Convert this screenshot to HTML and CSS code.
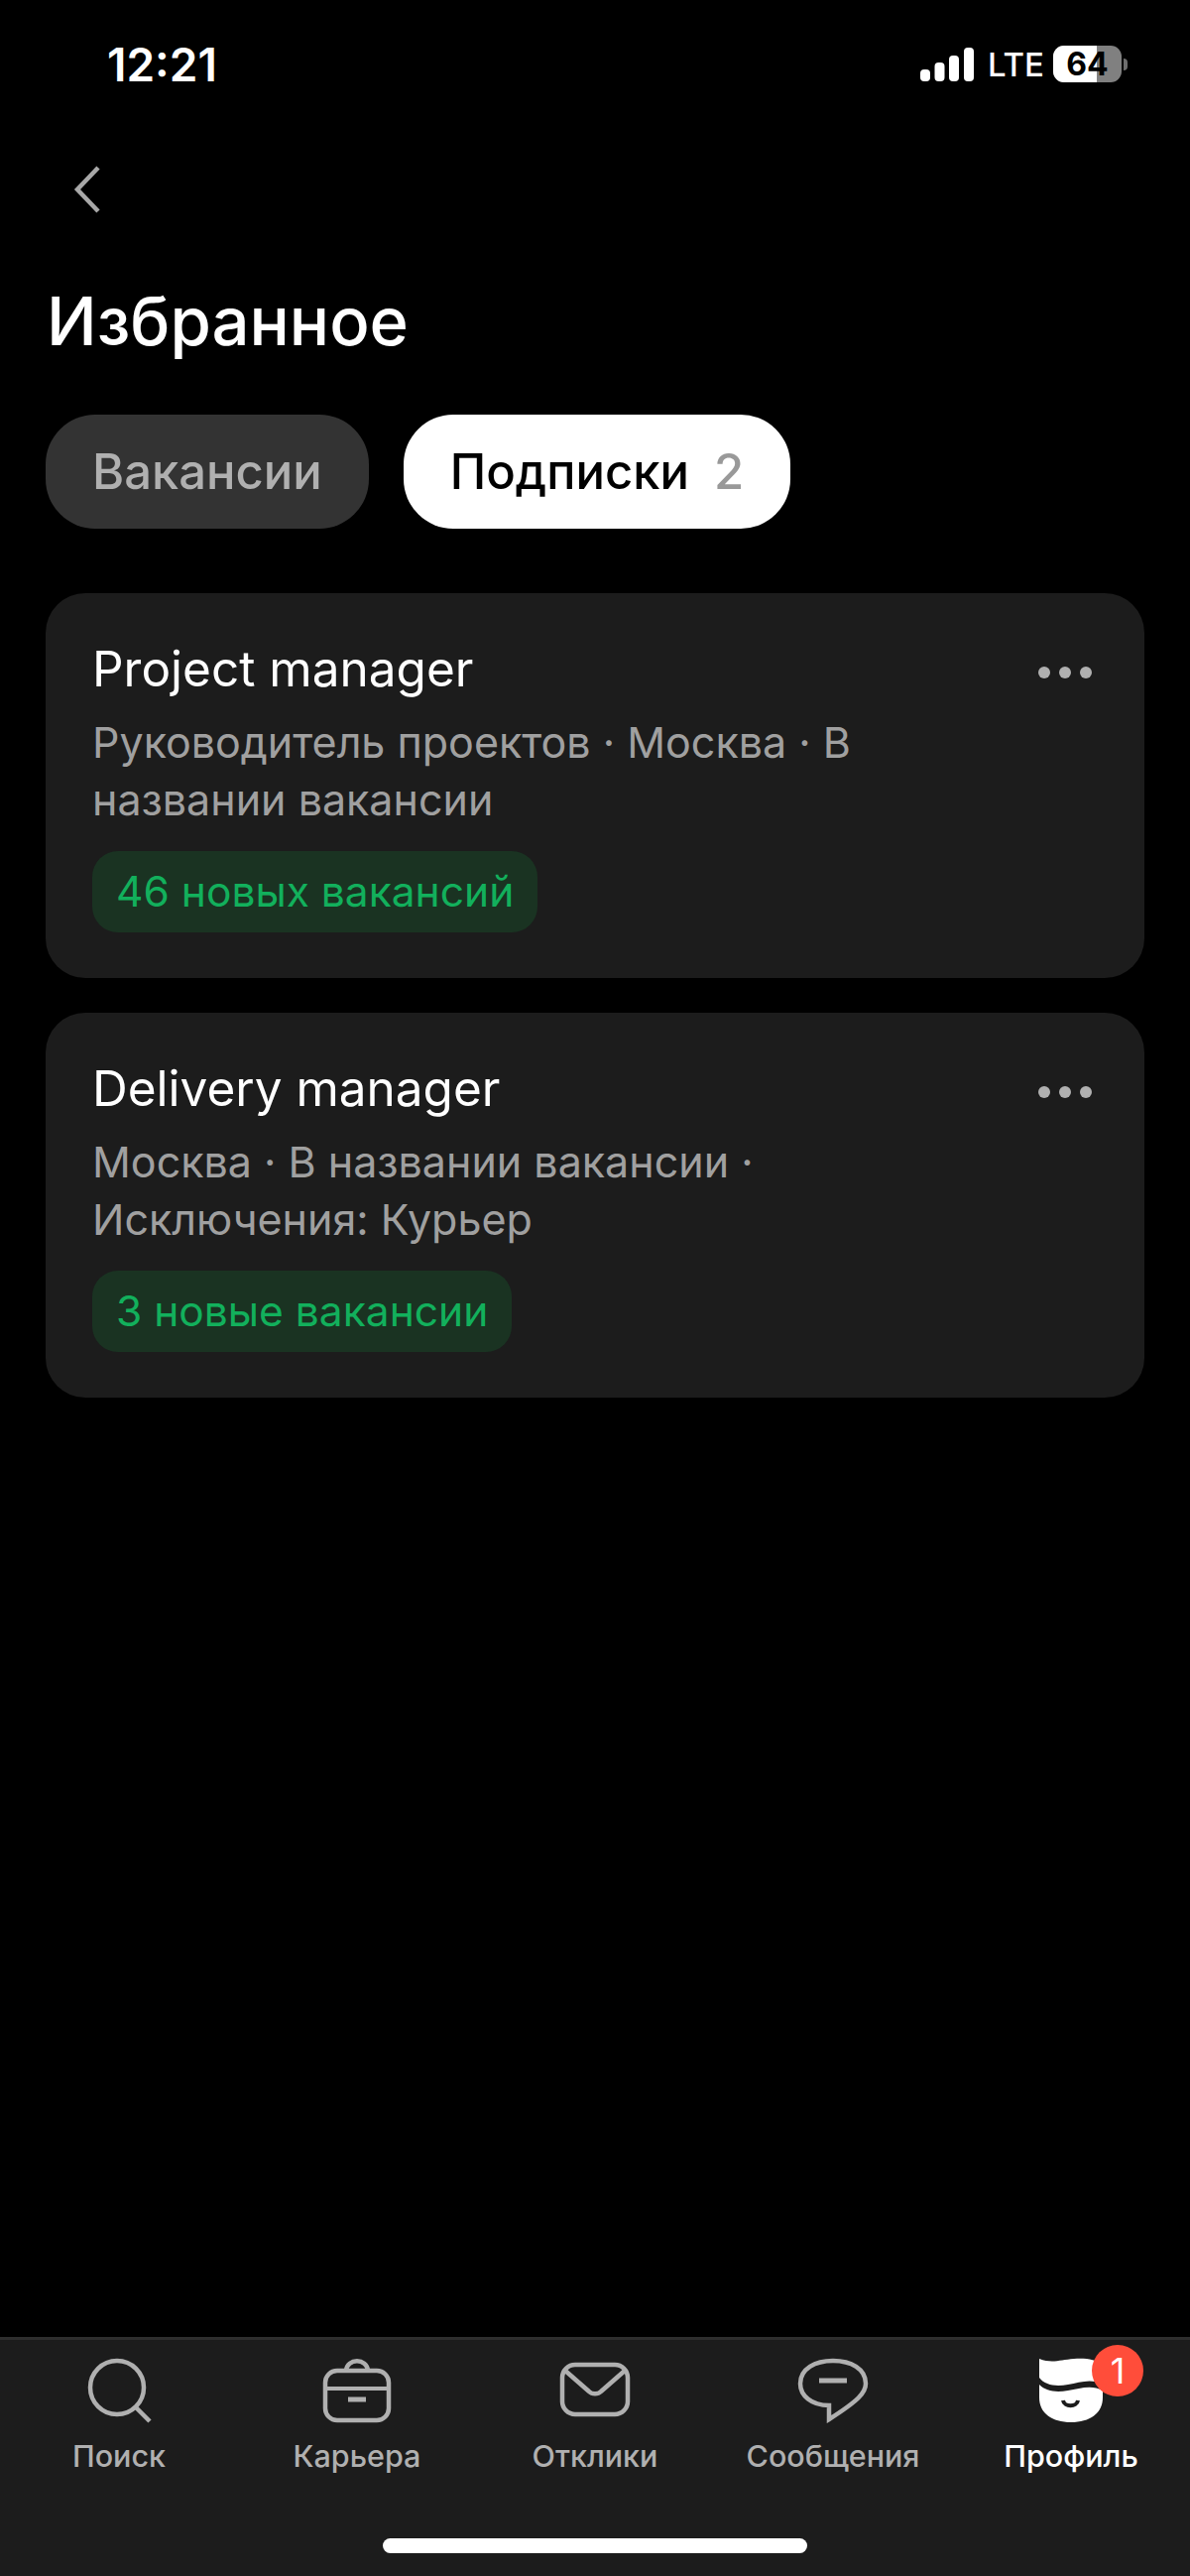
FILE: index.html
```html
<!DOCTYPE html>
<html lang="ru">
<head>
    <meta charset="UTF-8">
    <meta name="viewport" content="width=device-width, initial-scale=1.0">
    <title>Избранное</title>
    <link rel="stylesheet" href="styles.css">
</head>
<body>
    <div class="screen">
        <div class="status-bar">
            <span class="time">12:21</span>
            <div class="status-icons">
                <svg class="signal" width="54" height="34" viewBox="0 0 54 34" fill="#fff">
                    <rect x="0" y="22" width="10" height="12" rx="4"/>
                    <rect x="14.500" y="15" width="10" height="19" rx="4"/>
                    <rect x="29" y="8" width="10" height="26" rx="4"/>
                    <rect x="44" y="0" width="10" height="34" rx="4"/>
                </svg>
                <span class="lte">LTE</span>
                <div class="battery">
                    <div class="battery-body">
                        <div class="battery-fill"></div>
                        <span class="battery-level">64</span>
                    </div>
                    <div class="battery-nub"></div>
                </div>
            </div>
        </div>

        <div class="back-row">
            <svg width="30" height="48" viewBox="0 0 30 48" fill="none" stroke="#a8a8a8" stroke-width="4.500">
                <path d="M26 2 L5 24 L26 46"/>
            </svg>
        </div>

        <h1 class="title">Избранное</h1>

        <div class="tabs">
            <div class="tab">Вакансии</div>
            <div class="tab tab-active">Подписки <span class="tab-count">2</span></div>
        </div>

        <div class="cards">
            <div class="card">
                <div class="card-head">
                    <div class="card-title">Project manager</div>
                    <div class="dots"><i></i><i></i><i></i></div>
                </div>
                <div class="card-text">Руководитель проектов · Москва · В названии вакансии</div>
                <div class="chip">46 новых вакансий</div>
            </div>
            <div class="card">
                <div class="card-head">
                    <div class="card-title">Delivery manager</div>
                    <div class="dots"><i></i><i></i><i></i></div>
                </div>
                <div class="card-text">Москва · В названии вакансии · Исключения: Курьер</div>
                <div class="chip">3 новые вакансии</div>
            </div>
        </div>

        <div class="nav">
            <div class="nav-items">
                <div class="nav-item">
                    <svg width="70" height="66" viewBox="0 0 70 66" fill="none" stroke="#b0b0b0" stroke-width="4.500">
                        <circle cx="33" cy="30" r="27"/>
                        <path d="M52 50 L66 64"/>
                    </svg>
                    <span>Поиск</span>
                </div>
                <div class="nav-item">
                    <svg width="70" height="66" viewBox="0 0 70 66" fill="none" stroke="#b0b0b0" stroke-width="4.500">
                        <rect x="3" y="13" width="64" height="50" rx="12"/>
                        <path d="M3 31 H67" stroke-width="4"/>
                        <path d="M24 13 C25 0 45 0 46 13"/>
                        <path d="M26 42 H44" stroke-width="5"/>
                    </svg>
                    <span>Карьера</span>
                </div>
                <div class="nav-item">
                    <svg width="72" height="66" viewBox="0 0 72 66" fill="none" stroke="#b0b0b0" stroke-width="4.500">
                        <rect x="3" y="7" width="66" height="50" rx="13"/>
                        <path d="M6 13 L30 34 C33 37 39 37 42 34 L66 13"/>
                    </svg>
                    <span>Отклики</span>
                </div>
                <div class="nav-item">
                    <svg width="72" height="66" viewBox="0 0 72 66" fill="none" stroke="#b0b0b0" stroke-width="4.500">
                        <path d="M36 3 C54 3 69 11 69 26 C69 35 62 43 32 62 L32 48 C14 48 3 38 3 26 C3 11 18 3 36 3 Z"/>
                        <path d="M22 23 H50" stroke-width="5"/>
                    </svg>
                    <span>Сообщения</span>
                </div>
                <div class="nav-item nav-item-active">
                    <div class="profile-icon">
                        <svg width="70" height="66" viewBox="0 0 70 66">
                            <path fill="#fff" d="M3 1 C16 6 24 2 38 1 C50 0 60 2 67 6 L67 27 C55 20 44 25 32 27 C20 29 9 28 3 20 Z"/>
                            <path fill="#fff" d="M3 27 C10 34 20 35 32 33 C44 31 56 27 67 33 L67 40 C67 56 54 65 35 65 C16 65 3 56 3 40 Z"/>
                            <path fill="none" stroke="#1c1c1c" stroke-width="4" d="M27 43 C28 50 41 50 42 43"/>
                        </svg>
                        <div class="badge">1</div>
                    </div>
                    <span>Профиль</span>
                </div>
            </div>
            <div class="home-bar"></div>
        </div>
    </div>
</body>
</html>
```

FILE: styles.css
```css
* {
    box-sizing: border-box;
}

body {
    margin: 0;
    background-color: #000;
    font-family: Inter, "Noto Sans", sans-serif;
    color: #fff;
}

.screen {
    display: flex;
    flex-direction: column;
    height: 2597px;
    overflow: hidden;
}

/* status bar */
.status-bar {
    display: flex;
    justify-content: space-between;
    align-items: center;
    height: 37px;
    margin-top: 46px;
    padding: 0 63px 0 108px;
}

.time {
    font-size: 46px;
    font-weight: 600;
}

.status-icons {
    display: flex;
    align-items: center;
}

.lte {
    margin-left: 14px;
    font-size: 33px;
    font-weight: 500;
    width: 50px;
}

.battery {
    display: flex;
    align-items: center;
    margin-left: 16px;
}

.battery-body {
    position: relative;
    display: flex;
    justify-content: center;
    align-items: center;
    width: 69px;
    height: 37px;
    border-radius: 11px;
    background-color: #808080;
}

.battery-fill {
    position: absolute;
    left: 0;
    top: 0;
    bottom: 0;
    width: 44px;
    border-radius: 11px 0 0 11px;
    background-color: #fff;
}

.battery-level {
    position: relative;
    font-size: 32px;
    font-weight: 700;
    color: #000;
}

.battery-nub {
    width: 4px;
    height: 12px;
    margin-left: 2px;
    border-radius: 0 6px 6px 0;
    background-color: #6e6e6e;
}

.back-row {
    margin-top: 84px;
    padding-left: 73px;
    height: 48px;
    display: flex;
}

.title {
    margin: 68px 0 0 47px;
    font-size: 67px;
    line-height: 82px;
    font-weight: 500;
}

.tabs {
    display: flex;
    gap: 35px;
    margin: 53px 0 0 46px;
}

.tab {
    height: 115px;
    padding: 0 47px;
    border-radius: 50px;
    background-color: #333;
    color: #b0b0b0;
    font-size: 49px;
    font-weight: 500;
    line-height: 115px;
}

.tab-active {
    background-color: #fff;
    color: #000;
}

.tab-count {
    margin-left: 12px;
    color: #999;
}

.cards {
    display: flex;
    flex-direction: column;
    gap: 35px;
    margin: 65px 46px 0;
}

.card {
    height: 388px;
    padding: 47px 47px 0;
    border-radius: 40px;
    background-color: #1c1c1c;
}

.card-head {
    display: flex;
    justify-content: space-between;
    align-items: center;
}

.card-title {
    font-size: 49.500px;
    line-height: 58px;
}

.dots {
    display: flex;
    gap: 9px;
    margin-right: 6px;
    margin-top: 8px;
}

.dots i {
    width: 12px;
    height: 12px;
    border-radius: 50%;
    background-color: #b0b0b0;
}

.card-text {
    max-width: 800px;
    margin-top: 16px;
    font-size: 43px;
    line-height: 58px;
    color: #a0a0a0;
}

.chip {
    display: inline-block;
    margin-top: 23px;
    height: 82px;
    padding: 0 24px;
    border-radius: 26px;
    background-color: #1a3322;
    color: #12b05c;
    font-size: 42.500px;
    line-height: 82px;
}

/* bottom nav */
.nav {
    display: flex;
    flex-direction: column;
    margin-top: auto;
    height: 241px;
    border-top: 3px solid #2e2e2e;
    background-color: #1c1c1c;
}

.nav-items {
    display: flex;
    justify-content: space-around;
    padding: 18px 0 0 0;
}

.nav-item {
    display: flex;
    flex-direction: column;
    align-items: center;
    width: 240px;
    color: #b0b0b0;
    font-size: 30.500px;
    line-height: 40px;
    font-weight: 500;
}

.nav-item span {
    margin-top: 13px;
}

.nav-item-active {
    color: #fff;
}

.profile-icon {
    position: relative;
    height: 66px;
}

.badge {
    position: absolute;
    top: -13px;
    left: 56px;
    width: 52px;
    height: 52px;
    border-radius: 50%;
    background-color: #ff4d3a;
    color: #fff;
    font-size: 36px;
    font-weight: 400;
    line-height: 52px;
    text-align: center;
}

.home-bar {
    width: 428px;
    height: 15px;
    margin: auto auto 23px;
    border-radius: 8px;
    background-color: #fff;
}
```
